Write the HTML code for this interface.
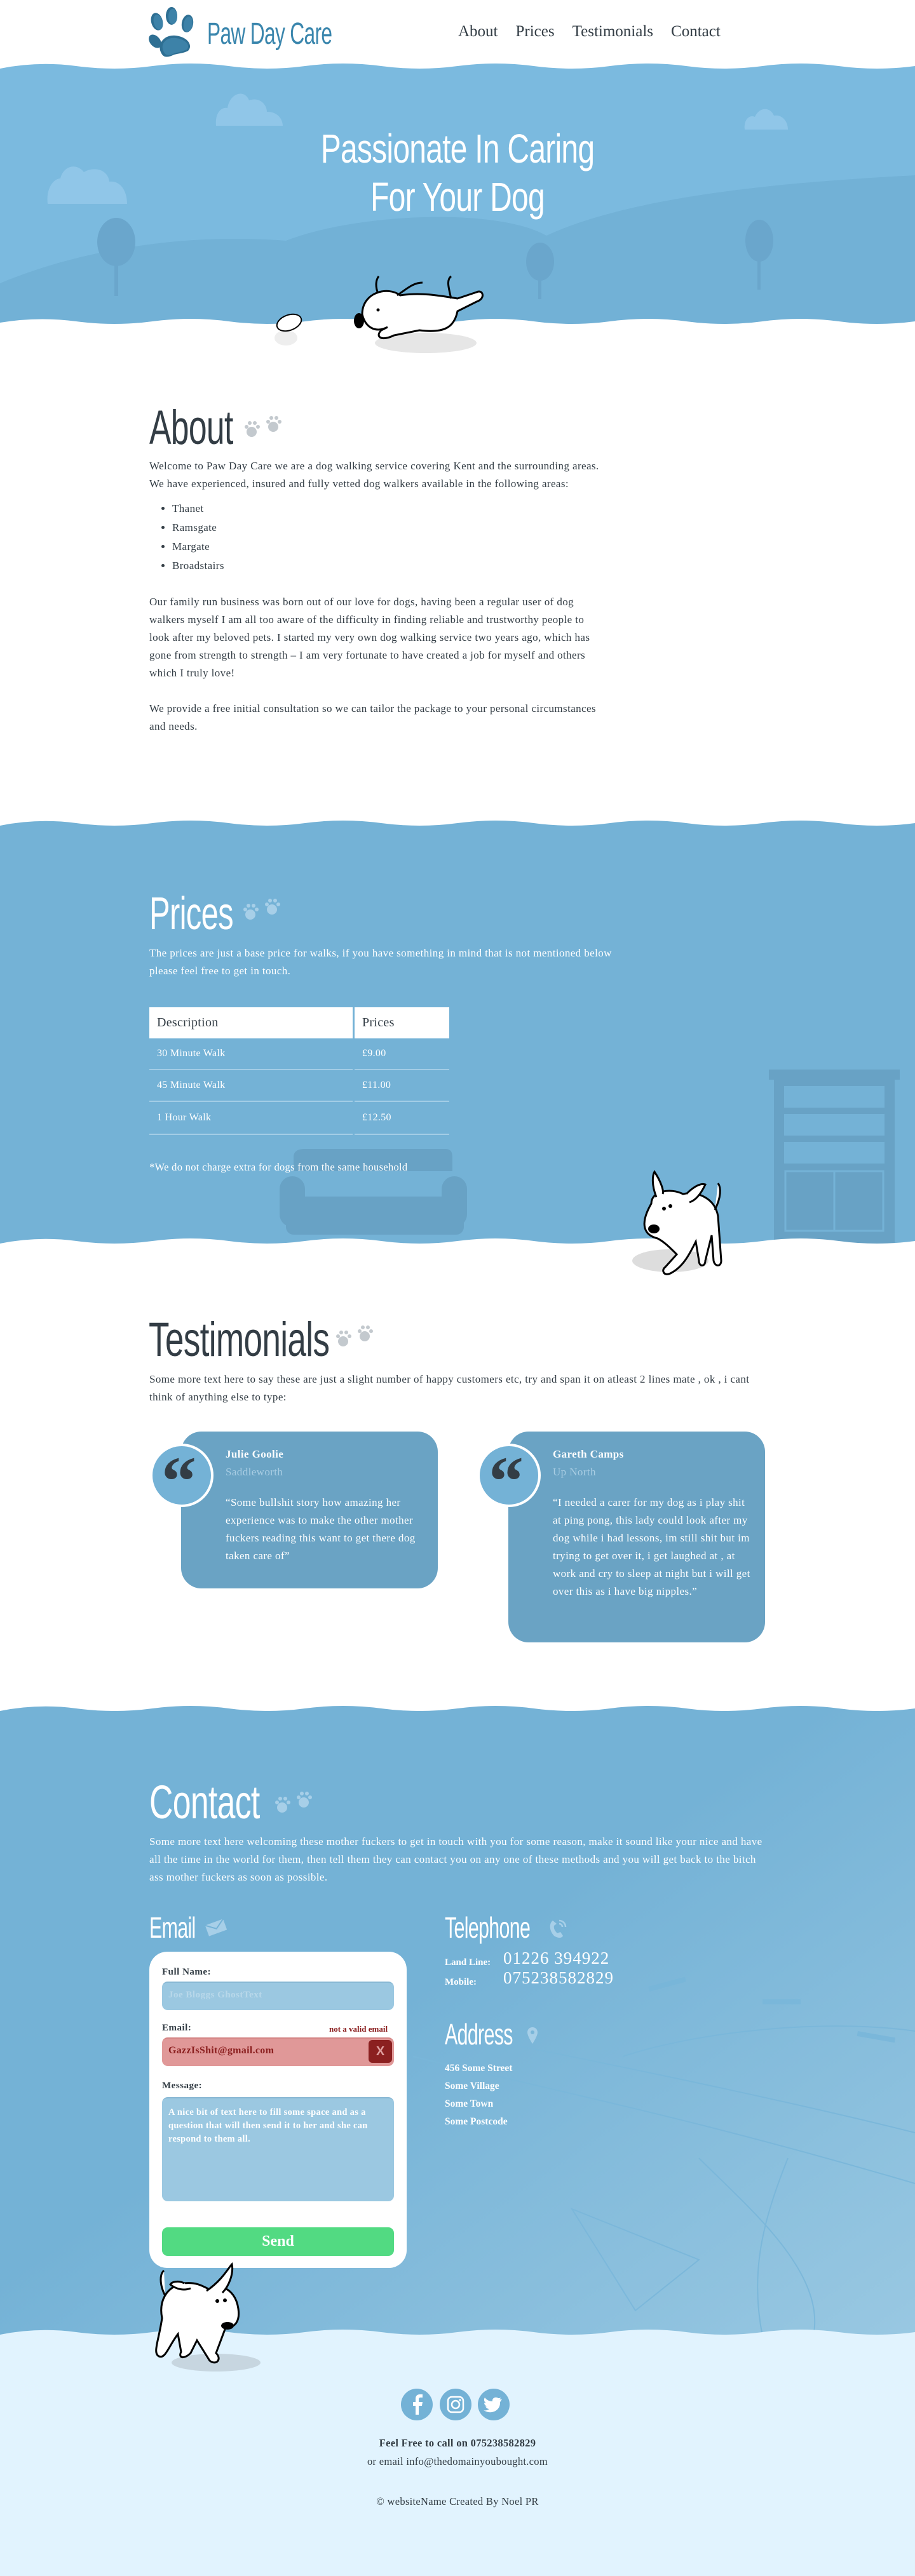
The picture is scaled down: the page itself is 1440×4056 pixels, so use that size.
<!DOCTYPE html>
<html><head><meta charset="utf-8">
<style>
*{margin:0;padding:0;box-sizing:border-box}
body{width:1440px;height:4056px;position:relative;background:#fff;font-family:"Liberation Serif",serif;color:#333d45;overflow:hidden}
.a{position:absolute}
.hand{font-family:"Liberation Sans",sans-serif;font-weight:normal;letter-spacing:-1px;transform-origin:left top;white-space:nowrap}
.txt{font-size:17px;line-height:28px;letter-spacing:.4px}
nav a{color:#333d45;text-decoration:none;font-size:25px;margin-left:28px;font-family:"Liberation Serif",serif}
table{border-collapse:separate;border-spacing:3px 0}
td,th{font-weight:normal;text-align:left;padding:0 12px}
.card{background:#6aa3c4;border-radius:32px;color:#fff}
.qc{width:100px;height:100px;border-radius:50%;background:#74b2d6;border:4px solid #fff;position:absolute}
.qc span{position:absolute;left:14px;top:-8px;font-size:110px;font-family:"Liberation Serif",serif;color:#333d45;font-weight:bold}
label{font-weight:bold;font-size:15px;letter-spacing:.5px}
.inp{background:#9bc8e1;border-radius:9px;border-top:2px solid #88b8d4}
</style></head><body>

<!-- Header -->
<svg class="a" style="left:232px;top:10px" width="84" height="82" viewBox="0 0 84 82">
<g fill="#2e6f93"><ellipse cx="15" cy="24" rx="9" ry="14" transform="rotate(-15 15 24)"/><ellipse cx="38" cy="15" rx="9" ry="14"/><ellipse cx="63" cy="27" rx="9" ry="14" transform="rotate(10 63 27)"/><ellipse cx="12" cy="55" rx="8" ry="12" transform="rotate(-40 12 55)"/><path d="M22 74C14 60 26 44 44 46 64 48 72 62 64 70 56 74 50 74 42 76 34 80 26 82 22 74Z"/></g>
<g fill="#3d82a8"><ellipse cx="17" cy="25" rx="7" ry="12" transform="rotate(-15 17 25)"/><ellipse cx="40" cy="16" rx="7" ry="12"/><ellipse cx="64" cy="28" rx="7" ry="12" transform="rotate(10 64 28)"/><path d="M26 72C19 60 29 48 45 50 61 52 68 62 62 68 55 71 50 72 42 74 35 78 29 78 26 72Z"/></g>
</svg>
<div class="a hand" style="left:326px;top:26px;font-size:48px;color:#3a86ad;transform:scaleX(.66)">Paw Day Care</div>
<nav class="a" style="left:693px;top:36px"><a>About</a><a>Prices</a><a>Testimonials</a><a>Contact</a></nav>

<!-- Hero -->
<svg class="a" style="left:0;top:96px" width="1440" height="440" viewBox="0 0 1440 440">
<path d="M0,12 Q60,0 120,8 T240,8 T360,8 T480,8 T600,8 T720,8 T840,8 T960,8 T1080,8 T1200,8 T1320,8 T1440,8 V420 H0Z" fill="#7bbadf"/>
<g fill="#90c6e8"><path d="M340,102 C338,80 350,72 358,74 362,50 385,44 392,62 410,56 420,70 420,80 440,80 445,95 445,102Z"/><path d="M75,225 C72,200 85,185 95,185 100,165 120,160 132,175 150,165 170,172 172,190 190,188 200,205 200,225Z"/><path d="M1172,108 C1170,92 1180,84 1188,88 1195,72 1212,72 1218,86 1230,84 1240,94 1240,108Z"/></g>
<path d="M0,350 C120,300 280,270 450,283 C560,240 780,230 860,275 C1000,210 1250,190 1440,180 V440 H0Z" fill="#72b1d6"/>
<g fill="#6aa6cc"><ellipse cx="183" cy="285" rx="30" ry="38"/><rect x="180" y="300" width="6" height="70"/><ellipse cx="850" cy="316" rx="22" ry="30"/><rect x="847" y="330" width="5" height="45"/><ellipse cx="1195" cy="283" rx="22" ry="33"/><rect x="1192" y="300" width="5" height="60"/></g>
<path d="M0,420 V412 Q60,402 120,410 T240,410 T360,410 T480,410 T600,410 T720,410 T840,410 T960,410 T1080,410 T1200,410 T1320,410 T1440,410 V440 H0Z" fill="#fff"/>
</svg>
<div class="a hand" style="left:0;width:1440px;top:196px;text-align:center;font-size:64px;line-height:76px;color:#fff;transform:scaleX(.75);transform-origin:center top">Passionate In Caring<br>For Your Dog</div>
<!-- hero dog -->
<svg class="a" style="left:420px;top:430px" width="400" height="130" viewBox="0 0 400 130">
<ellipse cx="30" cy="102" rx="18" ry="12" fill="#eee"/><ellipse cx="250" cy="110" rx="80" ry="16" fill="#e6e6e6"/>
<ellipse cx="35" cy="78" rx="20" ry="12" fill="#fff" stroke="#000" stroke-width="2" transform="rotate(-20 35 78)"/>
<path d="M150,65 C150,30 190,20 210,35 C240,30 270,35 300,40 L330,30 C340,25 345,40 330,45 L300,60 C295,85 280,95 240,90 L200,98 C180,108 170,100 180,90 L190,85 C170,95 155,85 150,65Z" fill="#fff" stroke="#000" stroke-width="3"/>
<path d="M175,32 C170,20 172,10 176,5 M205,35 C220,25 230,15 245,15 M290,40 C285,20 283,10 290,5" fill="none" stroke="#000" stroke-width="3"/>
<ellipse cx="145" cy="75" rx="8" ry="12" fill="#000"/><circle cx="175" cy="58" r="2.5" fill="#000"/>
</svg>

<!-- About -->
<div class="a hand" style="left:235px;top:630px;font-size:76px;color:#333d45;transform:scaleX(.68)">About</div>
<svg class="a" style="left:384px;top:652px" width="66" height="40" viewBox="0 0 66 40"><g fill="#c3c9ce"><ellipse cx="12" cy="28" rx="8" ry="8"/><circle cx="4" cy="20" r="3"/><circle cx="9" cy="14" r="3"/><circle cx="17" cy="14" r="3"/><circle cx="22" cy="20" r="3"/><ellipse cx="46" cy="20" rx="8" ry="8"/><circle cx="38" cy="12" r="3"/><circle cx="43" cy="6" r="3"/><circle cx="51" cy="6" r="3"/><circle cx="56" cy="12" r="3"/></g></svg>
<div class="a txt" style="left:235px;top:720px;width:720px">
<p>Welcome to Paw Day Care we are a dog walking service covering Kent and the surrounding areas. We have experienced, insured and fully vetted dog walkers available in the following areas:</p>
<ul style="margin:10px 0 0 36px;line-height:30px"><li>Thanet</li><li>Ramsgate</li><li>Margate</li><li>Broadstairs</li></ul>
<p style="margin-top:28px">Our family run business was born out of our love for dogs, having been a regular user of dog walkers myself I am all too aware of the difficulty in finding reliable and trustworthy people to look after my beloved pets. I started my very own dog walking service two years ago, which has gone from strength to strength – I am very fortunate to have created a job for myself and others which I truly love!</p>
<p style="margin-top:28px">We provide a free initial consultation so we can tailor the package to your personal circumstances and needs.</p>
</div>

<!-- Prices -->
<svg class="a" style="left:0;top:1284px" width="1440" height="690" viewBox="0 0 1440 690">
<path d="M0,16 Q60,4 120,12 T240,12 T360,12 T480,12 T600,12 T720,12 T840,12 T960,12 T1080,12 T1200,12 T1320,12 T1440,12 V680 H0Z" fill="#74b2d6"/>
<g fill="#68a2c5"><path d="M462,538 C462,528 470,525 480,525 H700 C710,525 712,530 712,540 V560 H462Z"/><rect x="440" y="568" width="40" height="80" rx="20"/><rect x="695" y="568" width="40" height="80" rx="20"/><rect x="450" y="600" width="280" height="60" rx="12"/>
<rect x="1210" y="400" width="206" height="16"/><rect x="1218" y="416" width="190" height="270"/></g>
<g fill="#74b2d6"><rect x="1234" y="426" width="158" height="34"/><rect x="1234" y="470" width="158" height="34"/><rect x="1234" y="514" width="158" height="34"/></g>
<g fill="none" stroke="#74b2d6" stroke-width="3"><rect x="1236" y="560" width="154" height="94"/><line x1="1313" y1="560" x2="1313" y2="654"/></g>
<path d="M0,690 V674 Q60,662 120,670 T240,670 T360,670 T480,670 T600,670 T720,670 T840,670 T960,670 T1080,670 T1200,670 T1320,670 T1440,670 V690Z" fill="#fff"/>
</svg>
<div class="a hand" style="left:235px;top:1398px;font-size:72px;color:#fff;transform:scaleX(.68)">Prices</div>
<svg class="a" style="left:382px;top:1412px" width="66" height="40" viewBox="0 0 66 40"><g fill="#a7cfe8"><ellipse cx="12" cy="28" rx="8" ry="8"/><circle cx="4" cy="20" r="3"/><circle cx="9" cy="14" r="3"/><circle cx="17" cy="14" r="3"/><circle cx="22" cy="20" r="3"/><ellipse cx="46" cy="20" rx="8" ry="8"/><circle cx="38" cy="12" r="3"/><circle cx="43" cy="6" r="3"/><circle cx="51" cy="6" r="3"/><circle cx="56" cy="12" r="3"/></g></svg>
<div class="a txt" style="left:235px;top:1487px;width:740px;color:#fff">The prices are just a base price for walks, if you have something in mind that is not mentioned below please feel free to get in touch.</div>
<table class="a" style="left:232px;top:1586px;width:478px;color:#fff;font-size:16px;letter-spacing:.3px">
<tr style="height:49px"><th style="background:#fff;color:#333d45;font-size:20px;width:320px">Description</th><th style="background:#fff;color:#333d45;font-size:20px">Prices</th></tr>
<tr style="height:50px"><td style="border-bottom:2px solid #a3cde6">30 Minute Walk</td><td style="border-bottom:2px solid #a3cde6">£9.00</td></tr>
<tr style="height:50px"><td style="border-bottom:2px solid #a3cde6">45 Minute Walk</td><td style="border-bottom:2px solid #a3cde6">£11.00</td></tr>
<tr style="height:52px"><td style="border-bottom:2px solid #a3cde6">1 Hour Walk</td><td style="border-bottom:2px solid #a3cde6">£12.50</td></tr>
</table>
<div class="a" style="left:235px;top:1828px;color:#fff;font-size:16.5px;letter-spacing:.3px">*We do not charge extra for dogs from the same household</div>
<!-- prices dog -->
<svg class="a" style="left:985px;top:1835px" width="180" height="180" viewBox="0 0 180 180">
<ellipse cx="70" cy="150" rx="60" ry="18" fill="#ddd"/>
<path d="M40,60 C40,40 70,35 90,45 C110,40 140,50 145,80 L150,150 C150,160 140,160 138,150 L135,110 L125,150 C125,160 115,160 115,150 L110,120 C100,140 90,160 70,170 C60,175 55,165 62,160 L80,140 C70,130 60,120 50,115 C30,110 20,95 40,60Z" fill="#fff" stroke="#000" stroke-width="3"/>
<path d="M48,50 C40,30 42,15 45,10 C55,25 60,40 58,45 M95,45 C110,30 120,28 125,30 C118,45 110,55 100,58 M140,70 C150,50 150,35 145,28" fill="#fff" stroke="#000" stroke-width="3"/>
<ellipse cx="44" cy="100" rx="9" ry="7" fill="#000"/><circle cx="60" cy="68" r="3" fill="#000"/><circle cx="70" cy="64" r="3" fill="#000"/>
</svg>

<!-- Testimonials -->
<div class="a hand" style="left:234px;top:2066px;font-size:76px;color:#333d45;transform:scaleX(.7)">Testimonials</div>
<svg class="a" style="left:528px;top:2084px" width="66" height="40" viewBox="0 0 66 40"><g fill="#c3c9ce"><ellipse cx="12" cy="28" rx="8" ry="8"/><circle cx="4" cy="20" r="3"/><circle cx="9" cy="14" r="3"/><circle cx="17" cy="14" r="3"/><circle cx="22" cy="20" r="3"/><ellipse cx="46" cy="20" rx="8" ry="8"/><circle cx="38" cy="12" r="3"/><circle cx="43" cy="6" r="3"/><circle cx="51" cy="6" r="3"/><circle cx="56" cy="12" r="3"/></g></svg>
<div class="a txt" style="left:235px;top:2158px;width:980px">Some more text here to say these are just a slight number of happy customers etc, try and span it on atleast 2 lines mate , ok , i cant think of anything else to type:</div>

<div class="a card" style="left:285px;top:2254px;width:404px;height:247px"></div>
<div class="qc" style="left:236px;top:2273px"><span>“</span></div>
<div class="a txt" style="left:355px;top:2276px;width:315px;color:#fff">
<div style="font-weight:bold">Julie Goolie</div>
<div style="color:#a8cde3">Saddleworth</div>
<div style="margin-top:20px">“Some bullshit story how amazing her experience was to make the other mother fuckers reading this want to get there dog taken care of”</div></div>

<div class="a card" style="left:800px;top:2254px;width:404px;height:332px"></div>
<div class="qc" style="left:751px;top:2273px"><span>“</span></div>
<div class="a txt" style="left:870px;top:2276px;width:315px;color:#fff">
<div style="font-weight:bold">Gareth Camps</div>
<div style="color:#a8cde3">Up North</div>
<div style="margin-top:20px">“I needed a carer for my dog as i play shit at ping pong, this lady could look after my dog while i had lessons, im still shit but im trying to get over it, i get laughed at , at work and cry to sleep at night but i will get over this as i have big nipples.”</div></div>

<!-- Contact -->
<svg class="a" style="left:0;top:2678px" width="1440" height="1010" viewBox="0 0 1440 1010">
<defs><linearGradient id="g" x1="0" y1="0" x2="1" y2="1"><stop offset=".45" stop-color="#74b2d6"/><stop offset="1" stop-color="#99c8e2"/></linearGradient></defs>
<path d="M0,16 Q60,4 120,12 T240,12 T360,12 T480,12 T600,12 T720,12 T840,12 T960,12 T1080,12 T1200,12 T1320,12 T1440,12 V1010 H0Z" fill="url(#g)"/>
<g fill="none" stroke="#7ab7da" stroke-width="2" opacity=".9"><path d="M700,520 C900,560 1200,620 1440,680"/><path d="M650,560 C900,620 1100,660 1440,760"/><path d="M1100,720 C1180,800 1300,900 1280,1000"/><path d="M1240,720 C1200,820 1180,900 1200,1000"/><path d="M900,800 L1100,880 L1000,960 Z"/><path d="M980,560 C1100,520 1300,500 1440,520"/></g>
<g fill="#78b6da" opacity=".8"><rect x="1020" y="450" width="60" height="8" transform="rotate(-15 1020 450)"/><rect x="1200" y="470" width="60" height="8"/><rect x="1350" y="520" width="60" height="8" transform="rotate(10 1350 520)"/></g>
<path d="M0,1010 V998 Q60,986 120,994 T240,994 T360,994 T480,994 T600,994 T720,994 T840,994 T960,994 T1080,994 T1200,994 T1320,994 T1440,994 V1010Z" fill="#e1f3fe"/>
</svg>
<div class="a hand" style="left:235px;top:2795px;font-size:74px;color:#fff;transform:scaleX(.7)">Contact</div>
<svg class="a" style="left:432px;top:2818px" width="66" height="40" viewBox="0 0 66 40"><g fill="#a7cfe8"><ellipse cx="12" cy="28" rx="8" ry="8"/><circle cx="4" cy="20" r="3"/><circle cx="9" cy="14" r="3"/><circle cx="17" cy="14" r="3"/><circle cx="22" cy="20" r="3"/><ellipse cx="46" cy="20" rx="8" ry="8"/><circle cx="38" cy="12" r="3"/><circle cx="43" cy="6" r="3"/><circle cx="51" cy="6" r="3"/><circle cx="56" cy="12" r="3"/></g></svg>
<div class="a txt" style="left:235px;top:2886px;width:965px;color:#fff">Some more text here welcoming these mother fuckers to get in touch with you for some reason, make it sound like your nice and have all the time in the world for them, then tell them they can contact you on any one of these methods and you will get back to the bitch ass mother fuckers as soon as possible.</div>

<div class="a hand" style="left:235px;top:3008px;font-size:46px;color:#fff;transform:scaleX(.66)">Email</div>
<svg class="a" style="left:322px;top:3020px" width="36" height="30" viewBox="0 0 36 30"><g transform="rotate(-20 18 15)"><rect x="3" y="6" width="30" height="18" fill="#a7cfe8"/><path d="M3 6 L18 17 L33 6" fill="none" stroke="#74b2d6" stroke-width="2"/></g></svg>
<div class="a hand" style="left:700px;top:3008px;font-size:46px;color:#fff;transform:scaleX(.66)">Telephone</div>
<svg class="a" style="left:862px;top:3020px" width="32" height="34" viewBox="0 0 32 34"><path d="M8 4 C2 8 2 20 10 28 C16 32 22 32 24 28 L20 22 L15 24 C11 20 9 16 10 12 L14 9 Z" fill="#a7cfe8"/><path d="M18 4 A10 10 0 0 1 28 14 M18 9 A5 5 0 0 1 23 14" stroke="#a7cfe8" stroke-width="2.5" fill="none"/></svg>
<div class="a" style="left:700px;top:3082px;color:#fff;font-size:15px;font-weight:bold">Land Line:</div>
<div class="a" style="left:792px;top:3068px;color:#fff;font-size:27px;letter-spacing:1px">01226 394922</div>
<div class="a" style="left:700px;top:3113px;color:#fff;font-size:15px;font-weight:bold">Mobile:</div>
<div class="a" style="left:792px;top:3099px;color:#fff;font-size:27px;letter-spacing:1px">075238582829</div>
<div class="a hand" style="left:700px;top:3176px;font-size:46px;color:#fff;transform:scaleX(.66)">Address</div>
<svg class="a" style="left:828px;top:3190px" width="20" height="30" viewBox="0 0 20 30"><path d="M10 2 C4 2 2 7 2 10 C2 16 10 28 10 28 C10 28 18 16 18 10 C18 7 16 2 10 2Z M10 7 A3 3 0 1 0 10.1 7Z" fill="#a7cfe8" fill-rule="evenodd"/></svg>
<div class="a" style="left:700px;top:3243px;color:#fff;font-size:15.5px;font-weight:bold;line-height:28px">456 Some Street<br>Some Village<br>Some Town<br>Some Postcode</div>

<!-- form -->
<div class="a" style="left:235px;top:3073px;width:405px;height:498px;background:#fff;border-radius:28px"></div>
<label class="a" style="left:255px;top:3097px">Full Name:</label>
<div class="a inp" style="left:255px;top:3120px;width:365px;height:45px;color:#b8d8ea;font-size:15px;font-weight:bold;padding:11px 10px;letter-spacing:.5px">Joe Bloggs GhostText</div>
<label class="a" style="left:255px;top:3185px">Email:</label>
<div class="a" style="left:518px;top:3187px;color:#8b1f1f;font-size:13px;font-weight:bold">not a valid email</div>
<div class="a" style="left:255px;top:3208px;width:365px;height:45px;background:#e09898;border-radius:9px;border-top:2px solid #d48585;color:#8b1f1f;font-size:16px;font-weight:bold;padding:10px 10px;letter-spacing:.3px">GazzIsShit@gmail.com</div>
<div class="a" style="left:580px;top:3212px;width:37px;height:36px;background:#8b2020;border-radius:6px;color:#e0a0a0;font-size:20px;text-align:center;line-height:36px;font-family:'Liberation Sans',sans-serif;font-weight:bold">X</div>
<label class="a" style="left:255px;top:3276px">Message:</label>
<div class="a inp" style="left:255px;top:3302px;width:365px;height:164px;color:#fff;font-size:14.5px;font-weight:bold;padding:12px 10px;line-height:21px;letter-spacing:.3px">A nice bit of text here to fill some space and as a question that will then send it to her and she can respond to them all.</div>
<div class="a" style="left:255px;top:3507px;width:365px;height:45px;background:#52da82;border-radius:9px;color:#fff;text-align:center;font-size:24px;font-weight:bold;line-height:45px">Send</div>

<!-- contact dog -->
<svg class="a" style="left:230px;top:3555px" width="200" height="185" viewBox="0 0 200 185">
<ellipse cx="110" cy="165" rx="70" ry="14" fill="#c7d6e0"/>
<path d="M25,95 C20,70 30,45 60,40 C80,38 90,45 100,50 C110,40 140,45 145,80 C148,100 140,110 125,110 L110,150 C120,160 110,170 100,162 L80,130 L70,150 C60,160 50,158 55,148 L50,120 C35,140 30,160 20,155 C10,150 20,130 25,95Z" fill="#fff" stroke="#000" stroke-width="3"/>
<path d="M30,60 C20,40 22,25 28,20 M95,52 C120,35 130,15 135,10 C138,25 130,45 120,55 M60,40 C50,35 40,38 38,42 C48,50 60,52 70,48" fill="#fff" stroke="#000" stroke-width="3"/>
<ellipse cx="128" cy="107" rx="10" ry="6" fill="#000"/><circle cx="112" cy="68" r="3" fill="#000"/><circle cx="124" cy="67" r="3" fill="#000"/>
</svg>

<!-- Footer -->
<div class="a" style="left:0;top:3688px;width:1440px;height:368px;background:#e1f3fe;z-index:-1"></div>
<svg class="a" style="left:630px;top:3760px" width="180" height="52" viewBox="0 0 180 52">
<g fill="#74b2d6"><circle cx="26" cy="26" r="25"/><circle cx="87" cy="26" r="25"/><circle cx="147" cy="26" r="25"/></g>
<path d="M29 42 V28 H34 L35 22 H29 V18 C29 16 30 15 32 15 H35 V10 H31 C26 10 24 13 24 17 V22 H20 V28 H24 V42Z" fill="#fff"/>
<rect x="75" y="14" width="24" height="24" rx="6" fill="none" stroke="#fff" stroke-width="2.5"/><circle cx="87" cy="26" r="6" fill="none" stroke="#fff" stroke-width="2.5"/><circle cx="94" cy="19" r="1.6" fill="#fff"/>
<path d="M160 17 C158 18 157 18 156 18 C157 17 158 16 158 15 C157 16 155 16 154 16 C150 13 144 16 145 21 C140 21 136 19 133 15 C131 18 132 22 135 24 C134 24 133 24 132 23 C132 26 134 28 137 29 C136 29 135 29 134 29 C135 31 137 33 140 33 C137 35 134 36 131 35 C144 43 158 35 157 22 C158 21 159 19 160 17Z" fill="#fff"/>
</svg>
<div class="a" style="left:0;width:1440px;top:3832px;text-align:center;font-size:16.5px;line-height:29px;font-weight:bold;color:#333d45;letter-spacing:.3px">Feel Free to call on 075238582829<br><span style="font-weight:normal">or email info@thedomainyoubought.com</span></div>
<div class="a" style="left:0;width:1440px;top:3929px;text-align:center;font-size:16.5px;color:#333d45;letter-spacing:.3px">© websiteName Created By Noel PR</div>
</body></html>
